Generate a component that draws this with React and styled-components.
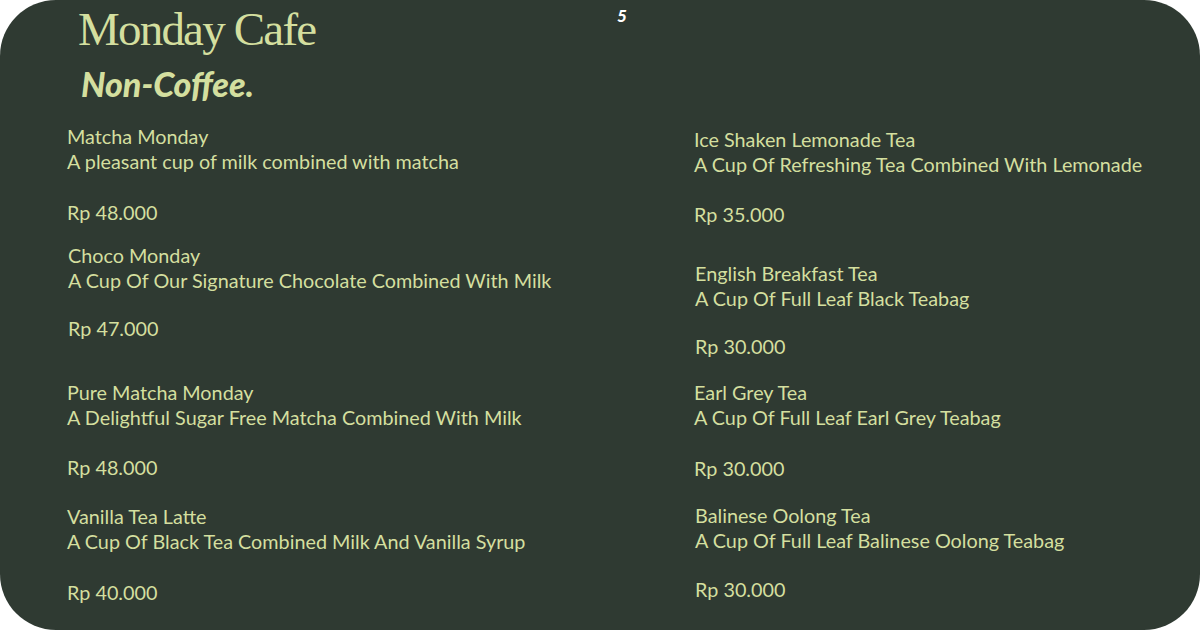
import styled, { createGlobalStyle } from 'styled-components';

const GlobalStyle = createGlobalStyle`
  html, body {
    margin: 0;
    padding: 0;
    background: #ffffff;
  }
`;

const leftItems = [
  { name: 'Matcha Monday', desc: 'A pleasant cup of milk combined with matcha', price: 'Rp 48.000', space: 0, priceGap: 26, indent: 0 },
  { name: 'Choco Monday', desc: 'A Cup Of Our Signature Chocolate Combined With Milk', price: 'Rp 47.000', space: 18, priceGap: 23, indent: 1 },
  { name: 'Pure Matcha Monday', desc: 'A Delightful Sugar Free Matcha Combined With Milk', price: 'Rp 48.000', space: 39, priceGap: 25, indent: 0 },
  { name: 'Vanilla Tea Latte', desc: 'A Cup Of Black Tea Combined Milk And Vanilla Syrup', price: 'Rp 40.000', space: 24, priceGap: 26, indent: 0 },
];

const rightItems = [
  { name: 'Ice Shaken Lemonade Tea', desc: 'A Cup Of Refreshing Tea Combined With Lemonade', price: 'Rp 35.000', space: 3, priceGap: 25, indent: 0 },
  { name: 'English Breakfast Tea', desc: 'A Cup Of Full Leaf Black Teabag', price: 'Rp 30.000', space: 34, priceGap: 23, indent: 1 },
  { name: 'Earl Grey Tea', desc: 'A Cup Of Full Leaf Earl Grey Teabag', price: 'Rp 30.000', space: 21, priceGap: 26, indent: 0 },
  { name: 'Balinese Oolong Tea', desc: 'A Cup Of Full Leaf Balinese Oolong Teabag', price: 'Rp 30.000', space: 22, priceGap: 24, indent: 1 },
];

const MenuItem = ({ item }) => (
  <Item $space={item.space} $indent={item.indent}>
    <Line>{item.name}</Line>
    <Line>{item.desc}</Line>
    <Price $gap={item.priceGap}>{item.price}</Price>
  </Item>
);

const App = () => {
  return (
    <>
      <GlobalStyle />
      <Panel>
        <Header>
          <TitleBlock>
            <Title>Monday Cafe</Title>
            <Subtitle>Non-Coffee.</Subtitle>
          </TitleBlock>
          <PageNo>5</PageNo>
        </Header>

        <Columns>
          <Column>
            {leftItems.map((item) => (
              <MenuItem key={item.name} item={item} />
            ))}
          </Column>
          <Column>
            {rightItems.map((item) => (
              <MenuItem key={item.name} item={item} />
            ))}
          </Column>
        </Columns>
      </Panel>
    </>
  );
};

const Panel = styled.main`
  width: 1200px;
  height: 630px;
  box-sizing: border-box;
  background: #2f3a32;
  border-radius: 56px;
  padding: 0 0 0 67px;
  color: #d4df9f;
  overflow: hidden;
`;

const Header = styled.header`
  display: grid;
  grid-template-columns: 550px auto;
  height: 124px;
`;

const TitleBlock = styled.div`
  display: flex;
  flex-direction: column;
  padding: 3px 0 0 11px;
`;

const Title = styled.h1`
  margin: 0;
  font-family: 'Liberation Serif', serif;
  font-weight: 400;
  font-size: 47px;
  line-height: 52px;
  letter-spacing: -1.8px;
  color: #d4df9f;
`;

const Subtitle = styled.h2`
  margin: 11px 0 0 3px;
  font-family: Lato, sans-serif;
  font-weight: 900;
  font-style: italic;
  font-size: 34px;
  line-height: 36px;
  color: #d4df9f;
`;

const PageNo = styled.span`
  padding-top: 6px;
  font-family: Lato, sans-serif;
  font-weight: 900;
  font-style: italic;
  font-size: 17px;
  line-height: 20px;
  color: #ffffff;
`;

const Columns = styled.section`
  display: grid;
  grid-template-columns: 627px 1fr;
`;

const Column = styled.div`
  display: flex;
  flex-direction: column;
`;

const Item = styled.article`
  margin-top: ${({ $space }) => $space}px;
  padding-left: ${({ $indent }) => $indent}px;
  font-family: Lato, sans-serif;
  font-size: 19.8px;
  line-height: 25px;
`;

const Line = styled.div`
  white-space: nowrap;
`;

const Price = styled.div`
  margin-top: ${({ $gap }) => $gap}px;
`;

export default App;
